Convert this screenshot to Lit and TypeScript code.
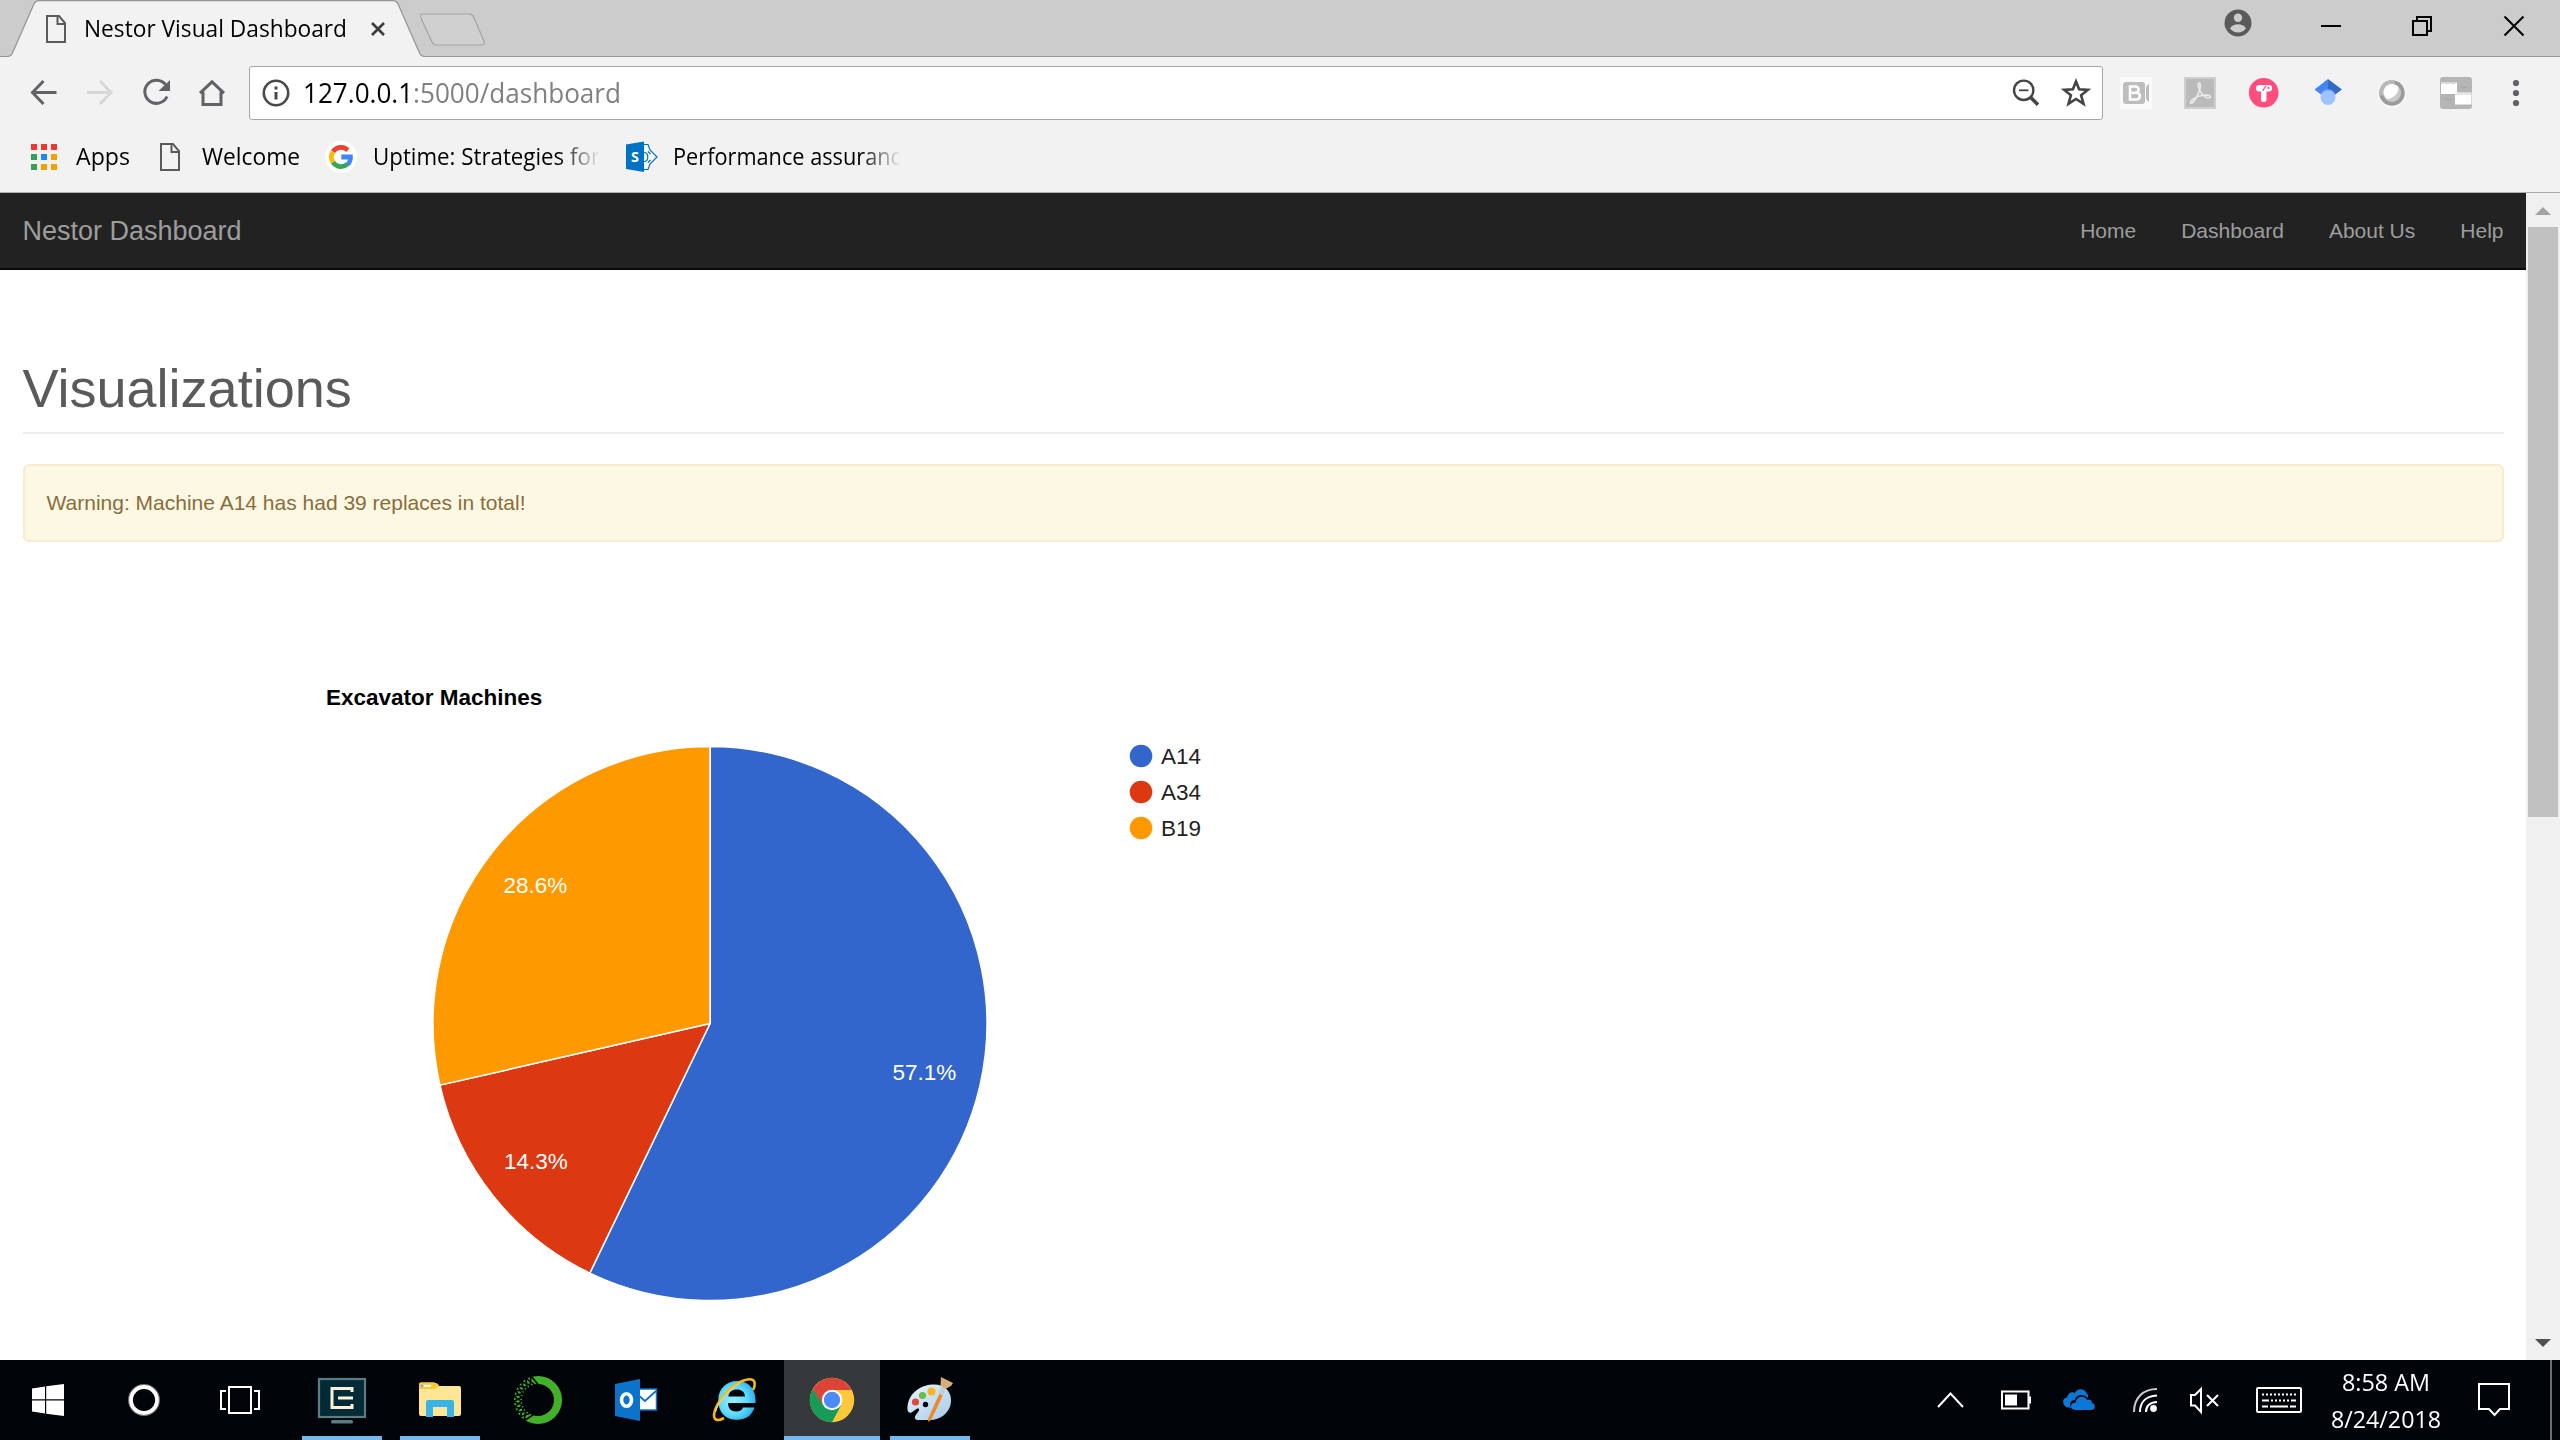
import { LitElement, html, css, svg, TemplateResult } from "lit";
import { customElement, property } from "lit/decorators.js";
import { classMap } from "lit/directives/class-map.js";

const icon = (w: number, h: number, body: unknown) =>
  html`<svg class="icon" width=${w} height=${h} viewBox="0 0 ${w} ${h}" fill="none">${body}</svg>`;

/* One line of text, condensed or widened to fill exactly the given width. */
@customElement("fit-text")
class FitText extends LitElement {
  @property({ type: Number }) width = 0;
  static styles = css`
    :host { display: block; flex: none; white-space: nowrap; }
    .run { display: inline-block; transform-origin: 0 50%; }
  `;
  firstUpdated() {
    const run = this.renderRoot.querySelector(".run") as HTMLElement;
    this.style.width = this.width + "px";
    run.style.transform = `scaleX(${this.width / run.getBoundingClientRect().width})`;
  }
  render() {
    return html`<span class="run"><slot></slot></span>`;
  }
}

const pageIcon = icon(20, 28, svg`
  <path d="M1 1H13L19 8V27H1Z" stroke="#5a5a5a" stroke-width="2"/>
  <path d="M11.5 1V9H19" stroke="#5a5a5a" stroke-width="2"/>`);

const win = {
  account: icon(32, 32, svg`
    <circle cx="16" cy="16" r="13.5" fill="#5a5a5a"/>
    <circle cx="16" cy="10.8" r="4.2" fill="#ccc"/>
    <path d="M8 21.5c1.5-3 5-4.200 8-4.200s6.500 1.200 8 4.200c-2 2.700-5 3.900-8 3.900s-6-1.200-8-3.900z" fill="#ccc"/>`),
  min: icon(32, 32, svg`<path d="M6 16H26" stroke="#000" stroke-width="2"/>`),
  restore: icon(32, 32, svg`<path d="M7 11H21V25H7ZM11 10V7H25V21H22" stroke="#000" stroke-width="2"/>`),
  close: icon(32, 32, svg`<path d="M6.500 6.500L25.500 25.500M25.500 6.500L6.500 25.500" stroke="#000" stroke-width="2"/>`),
};

const tool = {
  back: icon(28, 28, svg`<path d="M26.500 13.500H3M13.500 2L2.500 13.500L13.500 25" stroke="#5f6368" stroke-width="3"/>`),
  forward: icon(28, 28, svg`<path d="M1 13.500H25M14 2L25 13.500L14 25" stroke="#d6d7d8" stroke-width="3"/>`),
  reload: icon(28, 28, svg`
    <path d="M23.500 5.500A11.600 11.600 0 1 0 25 17.500" stroke="#5f6368" stroke-width="3"/>
    <path d="M28 1V12H16.500Z" fill="#5f6368"/>`),
  home: icon(28, 28, svg`
    <path d="M2 14.200L14 2.800L26 14.200M5 12.500V25.500H23V12.500" stroke="#5f6368" stroke-width="3"/>`),
  info: icon(28, 28, svg`
    <circle cx="14" cy="14" r="12.200" stroke="#4a4a4a" stroke-width="2.600"/>
    <path d="M14 13V20.500M14 7.500V10.500" stroke="#4a4a4a" stroke-width="3"/>`),
  zoom: icon(30, 30, svg`
    <circle cx="12.700" cy="12.300" r="9.700" stroke="#444" stroke-width="2.400"/>
    <path d="M8 12.300H17.400" stroke="#444" stroke-width="1.800"/>
    <path d="M19 18.700L27 26.700" stroke="#444" stroke-width="3.600"/>`),
  star: icon(30, 30, svg`
    <path d="M15 3.500L18.100 11.300L26.800 11.900L20.100 17.200L22.500 25.800L15 21L7.500 25.800L9.900 17.200L3.200 11.900L11.900 11.300Z" stroke="#444" stroke-width="2.600"/>`),
  menu: icon(32, 32, svg`<g fill="#5f6368"><circle cx="16" cy="6" r="3.100"/><circle cx="16" cy="16" r="3.100"/><circle cx="16" cy="26" r="3.100"/></g>`),
};

const extensions: TemplateResult[] = [
  icon(32, 32, svg`
    <rect width="32" height="32" fill="#fafafa"/>
    <rect x="3" y="5" width="22" height="22" rx="3" fill="#bdbdbd"/>
    <path d="M26 10L29 6.500V25.500L26 22Z" fill="#bdbdbd"/>
    <path d="M10 9.500H15.500a3 3 0 0 1 0 6.200H10ZM10 15.700H16.500a3.300 3.300 0 0 1 0 6.800H10Z" stroke="#fff" stroke-width="2.600"/>`),
  icon(32, 32, svg`
    <rect x="1" y="1" width="30" height="30" fill="#bababa" stroke="#cfcfcf" stroke-width="2"/>
    <path d="M15 6c-2 1 0 7 3 11c3 4 8 5 8.500 3c.5-2-6-2.500-11-1c-5 1.500-10 5-9 7c1.500 2 6-5 8-10c2-5 2.500-10 .5-10z" stroke="#e8e8e8" stroke-width="1.700"/>`),
  icon(32, 32, svg`
    <circle cx="15.700" cy="15.700" r="14.800" fill="#ff4d7d"/>
    <rect x="8" y="8" width="16" height="6.400" rx="3" fill="#fff"/>
    <rect x="13" y="12" width="5.500" height="13" rx="2.500" fill="#fff"/>
    <path d="M14.500 14L18 8.800" stroke="#ff4d7d" stroke-width="1.200"/>
    <circle cx="20.500" cy="11" r="1.100" fill="#ff4d7d"/>`),
  icon(32, 32, svg`
    <path d="M16 2L2.500 12.500L9.500 18L16 14Z" fill="#4285f4"/>
    <path d="M16 2L30 12.500L22.500 18L16 14Z" fill="#356ac3"/>
    <circle cx="16" cy="20.500" r="7.500" fill="#a0c3ff"/>
    <path d="M9.300 17a7.500 7.500 0 0 1 13.400 0" stroke="#76a7fa" stroke-width="1.400"/>`),
  icon(32, 32, svg`
    <circle cx="16" cy="16.500" r="14" fill="#fafafa"/>
    <circle cx="16" cy="16" r="12.800" fill="#9b9b9b"/>
    <path d="M3.500 19A12.800 12.800 0 0 1 19 3.500L16 16Z" fill="#b9b9b9"/>
    <circle cx="16" cy="16" r="9" fill="#c9c9c9"/>
    <path d="M22 9.500c2 5-4 12.500-11 12.500c-5-4-4.500-11 1-14c4-2 8-.5 10 1.500z" fill="#fff"/>`),
  icon(32, 32, svg`
    <rect width="32" height="32" rx="3" fill="#b5b5b5"/>
    <path d="M1 5.500H17V17H1Z" fill="#fff"/><path d="M15 15.500H31.500V27.500H15Z" fill="#fff"/>
    <path d="M1 7L4 5.500L7 7L10 5.500L13 7L16 5.500M15 17H31" stroke="#ccc" stroke-width="1"/>
    <path d="M20 9l3 2 3-1M5 21l4 2 3-1" stroke="#a3a3a3" stroke-width="1"/>`),
];

const appsIcon = icon(26, 26, svg`
  ${["#f4362f", "#f4362f", "#f4362f", "#34a05a", "#1e88f5", "#f0a202", "#34a05a", "#f0a202", "#f0a202"].map(
    (c, i) => svg`<rect x=${(i % 3) * 10} y=${Math.floor(i / 3) * 10} width="6" height="6" fill=${c}/>`)}`);

const googleIcon = icon(32, 32, svg`
  <circle cx="16" cy="16" r="16" fill="#fff"/>
  <path d="M8 10.800A9.600 9.600 0 0 1 22.800 9.200" stroke="#ea4335" stroke-width="4.800"/>
  <path d="M8 10.800A9.600 9.600 0 0 0 8 21.300" stroke="#fbbc05" stroke-width="4.800"/>
  <path d="M8 21.300A9.600 9.600 0 0 0 22.300 23.300" stroke="#34a853" stroke-width="4.800"/>
  <path d="M16.300 13.600H27.600C28.500 18.800 27 22.800 23.900 25.200L20.200 22.200C21.700 21.200 22.600 20 22.900 18.400H16.300Z" fill="#4285f4"/>`);

const sharepointIcon = icon(32, 32, svg`
  <path d="M18 3.500H22L24 9L31 16L24 23L22 28.500H18" stroke="#0072c6" stroke-width="1.200" fill="#f6fbff"/>
  <path d="M18 11.500c5 0 5 9 0 9M22 10.500l2.500 2.500M22 21.500l2.500-2.500" stroke="#0072c6" stroke-width="1.200"/>
  <path d="M0 3.500L18 0.500V31L0 28Z" fill="#0072c6"/>`);

interface AppItem { name: string; art: TemplateResult; running?: boolean; active?: boolean }

/* Crossed dark cuts that give the ring its scales, from the lower left up to the head. */
const ringPoint = (radius: number, angle: number) =>
  `${(24 + radius * Math.cos(angle)).toFixed(1)} ${(24 - radius * Math.sin(angle)).toFixed(1)}`;
const scales = Array.from({ length: 11 }, (_, i) => {
  const a = (Math.PI / 180) * (236 - i * 13);
  return svg`<path d="M${ringPoint(25, a)}L${ringPoint(15.5, a + 0.28)}M${ringPoint(25, a)}L${ringPoint(15.5, a - 0.28)}" stroke="#010408" stroke-width="1.700"/>`;
});

const apps: AppItem[] = [
  { name: "terminal", running: true, art: icon(48, 48, svg`
    <rect x="1" y="3" width="46" height="38" fill="#022b36" stroke="#5d7b80" stroke-width="2.200"/>
    <rect x="13" y="44" width="22" height="3.500" rx="1.500" fill="#5d7b80"/>
    <path d="M34 16V12.500H14V31.500H34V28M20 22H35" stroke="#fdf1dc" stroke-width="3"/>`) },
  { name: "explorer", running: true, art: icon(48, 48, svg`
    <path d="M3 8.500Q3 6.500 5 6.500H18L23 10H43Q45 10 45 12V38Q45 40 43 40H5Q3 40 3 38Z" fill="#ffe694"/>
    <path d="M3 8.500Q3 6.500 5 6.500H18Q22 7 23 9.500Q21 13 17 13H3Z" fill="#fcc934"/>
    <path d="M5 9.800H15" stroke="#fff" stroke-width="2"/><path d="M5 9.800H7.500" stroke="#3ab4e8" stroke-width="2"/>
    <path d="M10 41V26Q10 24 12 24H36Q38 24 38 26V41H31V31H17V41Z" fill="#3ab4e8"/>`) },
  { name: "anaconda", art: icon(48, 48, svg`
    <circle cx="24" cy="24" r="20" stroke="#43b02a" stroke-width="8"/>${scales}`) },
  { name: "outlook", art: icon(48, 48, svg`
    <rect x="24" y="13" width="20.500" height="21" fill="#fff" stroke="#0f6fc5" stroke-width="1.500"/>
    <path d="M26 19L33 25L44 15" stroke="#0f6fc5" stroke-width="1.800"/>
    <path d="M3 8L28 3V45L3 40Z" fill="#0b74ca"/>
    <ellipse cx="14.500" cy="24" rx="5" ry="6.300" stroke="#fff" stroke-width="3.600"/>`) },
  { name: "ie", art: icon(48, 48, svg`
    <defs><radialGradient id="ie" cx=".4" cy=".5" r=".6"><stop offset="0" stop-color="#9af0ff"/><stop offset=".6" stop-color="#5fdcfb"/><stop offset="1" stop-color="#2fb0ea"/></radialGradient></defs>
    <path fill-rule="evenodd" d="M45.500 27H18C18 32 21 35.500 26 35.500C30 35.500 32 34 33 31.500H44.500C42 39.500 35.500 43.800 27 43.800C15 43.800 8.300 36 8.300 24.500C8.300 13 16 5 27 5C38.500 5 46.500 13 45.500 27ZM18.300 20.500H35C34.500 15.500 31.500 13.500 27 13.500C22 13.500 19 16 18.300 20.500Z" fill="url(#ie)"/>
    <path d="M14 42C7 46 2.500 44 4.500 36C7 26 18 12 30 6C40 1.500 46 2.500 44.500 10C44.300 11.500 43.500 13 43 14" stroke="#f6b71d" stroke-width="2.600"/>
    <path d="M5.500 36C8 26 19 13 30 7" stroke="#ffdc66" stroke-width="1"/>`) },
  { name: "chrome", active: true, running: true, art: icon(48, 48, svg`
    <circle cx="24" cy="24" r="22.200" fill="#fdc93a"/>
    <path d="M24 24L14 29L4.800 12.900A22.200 22.200 0 0 1 43.800 14H24Z" fill="#db4437"/>
    <path d="M14.500 28.500L4.800 12.900A22.200 22.200 0 0 0 24 46.200L33 29.500Z" fill="#179c58"/>
    <circle cx="24" cy="24" r="10.200" fill="#fff"/><circle cx="24" cy="24" r="8.200" fill="#4c8bf5"/>`) },
  { name: "paint", running: true, art: icon(48, 48, svg`
    <defs><linearGradient id="pal" x1="0" y1="0" x2="1" y2="1"><stop offset="0" stop-color="#eaf5fc"/><stop offset="1" stop-color="#a4cbe6"/></linearGradient></defs>
    <path d="M26 8.500C38 7.500 46 15 45 26C44 37 34 44 24 44H13C9 44 8 42 9.500 39.500L13 34.500C13.500 32.500 12 32 10.500 33L5.500 36.500C2.500 37.500 1 35 1.500 31C2.500 19 12 9.500 26 8.500Z" fill="url(#pal)"/>
    <circle cx="19.500" cy="28.500" r="2.700" fill="#010408"/>
    <circle cx="9.500" cy="26" r="3.600" fill="#e8433c"/><circle cx="16.500" cy="19.500" r="3.600" fill="#68bf4a"/><circle cx="25.500" cy="15.500" r="4" fill="#fbb420"/>
    <path d="M34 17L30 25L22 43L22.500 46L25 44L31 32L37 19Z" fill="#ee8a28"/>
    <path d="M40 12L36 10L32.500 17.500L36.500 19.500Z" fill="#c3ccd2"/>
    <path d="M35 1L47 7L45 10L39.500 13L34.500 9.500Z" fill="#d8ad7a"/>`) },
];

const sys = {
  start: icon(32, 32, svg`<path d="M0 4.500L13 2.500V15.300H0ZM14.200 2.300L32 0V15.300H14.200ZM0 16.500H13V29.500L0 27.500ZM14.200 16.500H32V32L14.200 29.700Z" fill="#fff"/>`),
  cortana: icon(32, 32, svg`<circle cx="16" cy="16" r="15.200" stroke="#777" stroke-width="1.500"/><circle cx="16" cy="16" r="13" stroke="#fff" stroke-width="3.800"/>`),
  tasks: icon(40, 28, svg`<path d="M9 1H31V27H9ZM6 5H1V23H6M34 5H39V23H34" stroke="#fff" stroke-width="2"/>`),
  up: icon(28, 16, svg`<path d="M2 15L14.500 1.500L27 15" stroke="#fff" stroke-width="2"/>`),
  battery: icon(30, 20, svg`<path d="M1 1.500H27.500V18.500H1Z" stroke="#fff" stroke-width="2"/><path d="M4 4.500H16V15.500H4ZM27 6.500H30V13.500H27Z" fill="#fff"/>`),
  cloud: icon(32, 22, svg`<path d="M3 18C-1 15-1 9 4 8.500C5 4 9 2 12 4C14-1 22-1 24 5C26 6 25 8 24.500 9C20 4 13 6 12 11C7 11 6 16 8.500 19Z" fill="#0b78d8"/>
    <path d="M12 21C6 20 7 13.500 13 13.500C13 7 22 6 24 11C28 10 29 12 29 14C33 15 33 21 28 21Z" fill="#0b78d8"/>`),
  wifi: icon(24, 24, svg`<g stroke="#fff" stroke-width="2"><path d="M1 24C1 10 10 1 24 1" stroke="#ccc"/><path d="M7 24C7 14 13 8 24 7.500"/><path d="M13 24C13 18 17 14.500 24 14"/></g><circle cx="20.500" cy="20.500" r="3.400" fill="#fff"/>`),
  mute: icon(30, 26, svg`<path d="M1 8H5L11 2V25L5 18.500H1Z" stroke="#fff" stroke-width="2"/><path d="M17 8L28 19M28 8L17 19" stroke="#fff" stroke-width="2"/>`),
  keyboard: icon(46, 26, svg`<rect x="1" y="1" width="44" height="24" rx="1" stroke="#fff" stroke-width="2"/>
    <path d="M6 7.500H41M11 13.500H34" stroke="#fff" stroke-width="2" stroke-dasharray="2 2"/>
    <path d="M6 13.500H11M35 13.500H40M6 19.500H12M14 19.500H32M34 19.500H40" stroke="#fff" stroke-width="2"/>`),
  action: icon(32, 34, svg`<path d="M1 1H31V26H22L16.500 32L11 26H1Z" stroke="#fff" stroke-width="2"/>`),
};

/* Pie with its title and legend. */
@customElement("pie-chart")
class PieChart extends LitElement {
  static styles = css`
    :host { display: block; }
    .chart { display: block; font: 22.5px "Liberation Sans", Arial, sans-serif; }
    .title { font-weight: bold; fill: #000; }
    .key { fill: #222; }
    .share { fill: #fff; }
  `;
  slices = [
    { label: "A14", count: 4, color: "#3366cc", tx: 592.5, ty: 420 },
    { label: "A34", count: 1, color: "#dc3912", tx: 204, ty: 509 },
    { label: "B19", count: 2, color: "#ff9900", tx: 203.500, ty: 232.500 },
  ];
  render() {
    const cx = 410, cy = 363.5, r = 277;
    const total = this.slices.reduce((s, d) => s + d.count, 0);
    let at = 0;
    const parts = this.slices.map((d) => {
      const a0 = (at / total) * 2 * Math.PI;
      at += d.count;
      const a1 = (at / total) * 2 * Math.PI;
      const p = (a: number) => `${(cx + r * Math.sin(a)).toFixed(2)} ${(cy - r * Math.cos(a)).toFixed(2)}`;
      return svg`<path d="M${cx} ${cy}L${p(a0)}A${r} ${r} 0 ${a1 - a0 > Math.PI ? 1 : 0} 1 ${p(a1)}Z" fill=${d.color} stroke="#fff" stroke-width="1.5"/>`;
    });
    return html`<svg class="chart" width="940" height="690" viewBox="0 0 940 690">
      <text class="title" x="26" y="44.500">Excavator Machines</text>
      ${parts}
      ${this.slices.map((d) => svg`<text class="share" x=${d.tx} y=${d.ty}>${((d.count / total) * 100).toFixed(1)}%</text>`)}
      ${this.slices.map((d, i) => svg`
        <circle cx="841" cy=${96 + i * 36} r="11.3" fill=${d.color}/>
        <text class="key" x="861" y=${103.5 + i * 36}>${d.label}</text>`)}
    </svg>`;
  }
}

@customElement("app-root")
class AppRoot extends LitElement {
  static styles = css`
    :host { display: flex; flex-direction: column; width: 2560px; height: 1440px; overflow: hidden; background: #fff;
      font-family: "Open Sans", "Noto Sans", sans-serif; font-size: 23.5px; color: #000; }
    .icon { display: block; flex: none; overflow: visible; }
    .strip { display: flex; align-items: flex-start; height: 57px; background: #ccc; position: relative; box-shadow: inset 0 -1px #999; flex: none; }
    .tab { position: relative; width: 420px; height: 57px; flex: none; }
    .shape { position: absolute; left: 0; top: 0; }
    .tabline { position: relative; display: flex; align-items: center; height: 56px; padding: 1px 0 0 46px; }
    .tabline fit-text { margin: -2px 24px 0 18px; line-height: 32px; }
    .newtab { margin-top: 13px; }
    .controls { display: flex; margin-left: auto; padding: 10px 30px 0 0; }
    .controls .account { margin: -3px 61px 0 0; }
    .controls .min { margin-right: 59px; }
    .controls .restore { margin-right: 60px; }
    .bar { display: flex; align-items: center; height: 72px; background: #f2f2f2; padding: 0 28px 0 30px; flex: none; box-sizing: border-box; }
    .navs { display: flex; gap: 28px; margin-right: 23px; }
    .omnibox { display: flex; align-items: center; box-sizing: border-box; width: 1854px; height: 54px; border: 1px solid #a6a6a6; border-radius: 3px; background: #fff; padding: 0 11px 0 12px; font-size: 27.5px; }
    .omnibox fit-text { margin-left: 13px; line-height: 36px; margin-top: 0; }
    .path { color: #808080; }
    .boxtools { display: flex; gap: 20px; margin-left: auto; }
    .extensions { display: flex; gap: 32px; margin: 0 28px 0 17px; }
    .bookmarks { display: flex; align-items: center; height: 64px; box-sizing: border-box; padding: 0 0 8px 31px; background: #f2f2f2; border-bottom: 1px solid #adadad; flex: none; line-height: 34px; }
    .bookmarks fit-text { margin-top: -2px; }
    .fade { -webkit-mask-image: linear-gradient(90deg, #000 82%, transparent 100%); mask-image: linear-gradient(90deg, #000 82%, transparent 100%); overflow: hidden; }
    .view { display: flex; flex: 1; min-height: 0; font-family: "Liberation Sans", Arial, sans-serif; font-size: 21px; }
    .page { flex: 1; overflow: hidden; }
    .navbar { display: flex; align-items: center; height: 77px; box-sizing: border-box; border-bottom: 2px solid #080808; background: #222; color: #9d9d9d; padding: 0 22.5px; }
    .brand { font-size: 27px; flex: 1; padding-top: 1px; }
    .links { display: flex; gap: 45px; }
    .body { padding: 0 22.5px; }
    .heading { margin: 0; padding-top: 87px; line-height: 62px; height: 162px; box-sizing: border-box; font-size: 54px; font-weight: 400; color: #5a5a5a; }
    .rule { height: 2px; background: #eee; }
    .alert { margin-top: 30px; height: 78px; box-sizing: border-box; border: 2px solid #faebcc; border-radius: 6px; background: #fcf8e3; color: #8a6d3b; padding: 0 22px; line-height: 74px; }
    .plot { margin: 118px 0 0 277.5px; }
    .scroll { display: flex; flex-direction: column; align-items: center; width: 34px; background: #f0f0f0; box-sizing: border-box; }
    .arrow-up { margin: 14px 0 12px; }
    .thumb { width: 30px; height: 590px; background: #c1c1c1; }
    .arrow-down { margin: auto 0 13px; }
    .taskbar { display: flex; height: 80px; background: #010408; flex: none; }
    .slot { display: flex; align-items: center; justify-content: center; width: 96px; }
    .apps { display: flex; gap: 2px; margin-left: 6px; }
    .app { display: flex; flex-direction: column; align-items: center; width: 96px; height: 80px; padding-top: 16px; box-sizing: border-box; }
    .app.active { background: #36393c; }
    .under { width: 80px; height: 4px; margin-top: auto; background: #76b9ed; }
    .active .under { width: 96px; }
    .tray { display: flex; align-items: center; margin-left: auto; color: #fff; }
    .clock { display: flex; flex-direction: column; align-items: center; width: 112px; line-height: 37px; padding-top: 1px; margin: 0 36px 0 28px; }
    .peek { width: 2px; height: 80px; background: #6e6e6e; margin: 0 8px 0 40px; }
    .gap-a { margin-right: 37px; } .gap-b { margin-right: 32px; } .gap-c { margin-right: 38px; } .gap-d { margin-right: 33px; } .gap-e { margin-right: 36px; }
    .m1 { margin: 0 30px 0 19px; } .m2 { margin: 0 25px 0 22px; } .m3 { margin: 0 26px 0 16px; } .m4 { margin-left: 15px; }
    .sp { position: relative; }
    .sp-letter { position: absolute; left: 5px; top: 5px; font: bold 14.5px/22px "Open Sans", sans-serif; color: #fff; }
  `;

  render() {
    return html`
      <div class="strip">
        <div class="tab">
          <svg class="shape" width="432" height="57" viewBox="0 0 432 57">
            <path d="M0 57V56.500H7Q11 56.500 12.500 53L33.500 5Q35.500 .7 39 .7H393Q396.500 .7 398.500 5L419.500 53Q421 56.500 425 56.500V57Z" fill="#f2f2f2"/>
            <path d="M0 56.500H7Q11 56.500 12.500 53L33.500 5Q35.500 .7 39 .7H393Q396.500 .7 398.500 5L419.500 53Q421 56.500 425 56.500" fill="none" stroke="#949494" stroke-width="1.200"/>
          </svg>
          <div class="tabline">
            ${pageIcon}<fit-text width="263">Nestor Visual Dashboard</fit-text>
            ${icon(14, 14, svg`<path d="M1 1L13 13M13 1L1 13" stroke="#3c3c3c" stroke-width="2.600"/>`)}
          </div>
        </div>
        <svg class="newtab" width="68" height="34" viewBox="0 0 68 34">
          <path d="M2.500 1H49Q52 1 53.500 4L64 28Q65.500 32 61 32H17Q13.500 32 12 29L.5 4Q-.5 1 2.500 1Z" fill="#d0d0d0" stroke="#a3a3a3" stroke-width="1.200"/>
        </svg>
        <div class="controls">
          <div class="account">${win.account}</div><div class="min">${win.min}</div>
          <div class="restore">${win.restore}</div>${win.close}
        </div>
      </div>
      <div class="bar">
        <div class="navs">${tool.back}${tool.forward}${tool.reload}${tool.home}</div>
        <div class="omnibox">
          ${tool.info}<fit-text width="318">127.0.0.1<span class="path">:5000/dashboard</span></fit-text>
          <div class="boxtools">${tool.zoom}${tool.star}</div>
        </div>
        <div class="extensions">${extensions}</div>
        ${tool.menu}
      </div>
      <div class="bookmarks">
        ${appsIcon}<fit-text class="m1" width="54">Apps</fit-text>
        ${pageIcon}<fit-text class="m2" width="98">Welcome</fit-text>
        ${googleIcon}<fit-text class="m3 fade" width="227">Uptime: Strategies for</fit-text>
        <div class="sp">${sharepointIcon}<span class="sp-letter">S</span></div>
        <fit-text class="m4 fade" width="228">Performance assuranc</fit-text>
      </div>
      <div class="view">
        <div class="page">
          <div class="navbar">
            <div class="brand">Nestor Dashboard</div>
            <div class="links"><span>Home</span><span>Dashboard</span><span>About Us</span><span>Help</span></div>
          </div>
          <div class="body">
            <h1 class="heading">Visualizations</h1>
            <div class="rule"></div>
            <div class="alert">Warning: Machine A14 has had 39 replaces in total!</div>
            <pie-chart class="plot"></pie-chart>
          </div>
        </div>
        <div class="scroll">
          <div class="arrow-up">${icon(16, 8, svg`<path d="M8 0L16 8H0Z" fill="#a3a3a3"/>`)}</div>
          <div class="thumb"></div>
          <div class="arrow-down">${icon(16, 8, svg`<path d="M0 0H16L8 8Z" fill="#505050"/>`)}</div>
        </div>
      </div>
      <div class="taskbar">
        <div class="slot">${sys.start}</div><div class="slot">${sys.cortana}</div><div class="slot">${sys.tasks}</div>
        <div class="apps">
          ${apps.map((a) => html`<div class=${classMap({ app: true, active: !!a.active })}>${a.art}${a.running ? html`<div class="under"></div>` : ""}</div>`)}
        </div>
        <div class="tray">
          <div class="gap-a">${sys.up}</div><div class="gap-b">${sys.battery}</div><div class="gap-c">${sys.cloud}</div>
          <div class="gap-d">${sys.wifi}</div><div class="gap-e">${sys.mute}</div>${sys.keyboard}
          <div class="clock"><fit-text width="88">8:58 AM</fit-text><fit-text width="110">8/24/2018</fit-text></div>
          ${sys.action}<div class="peek"></div>
        </div>
      </div>`;
  }
}
